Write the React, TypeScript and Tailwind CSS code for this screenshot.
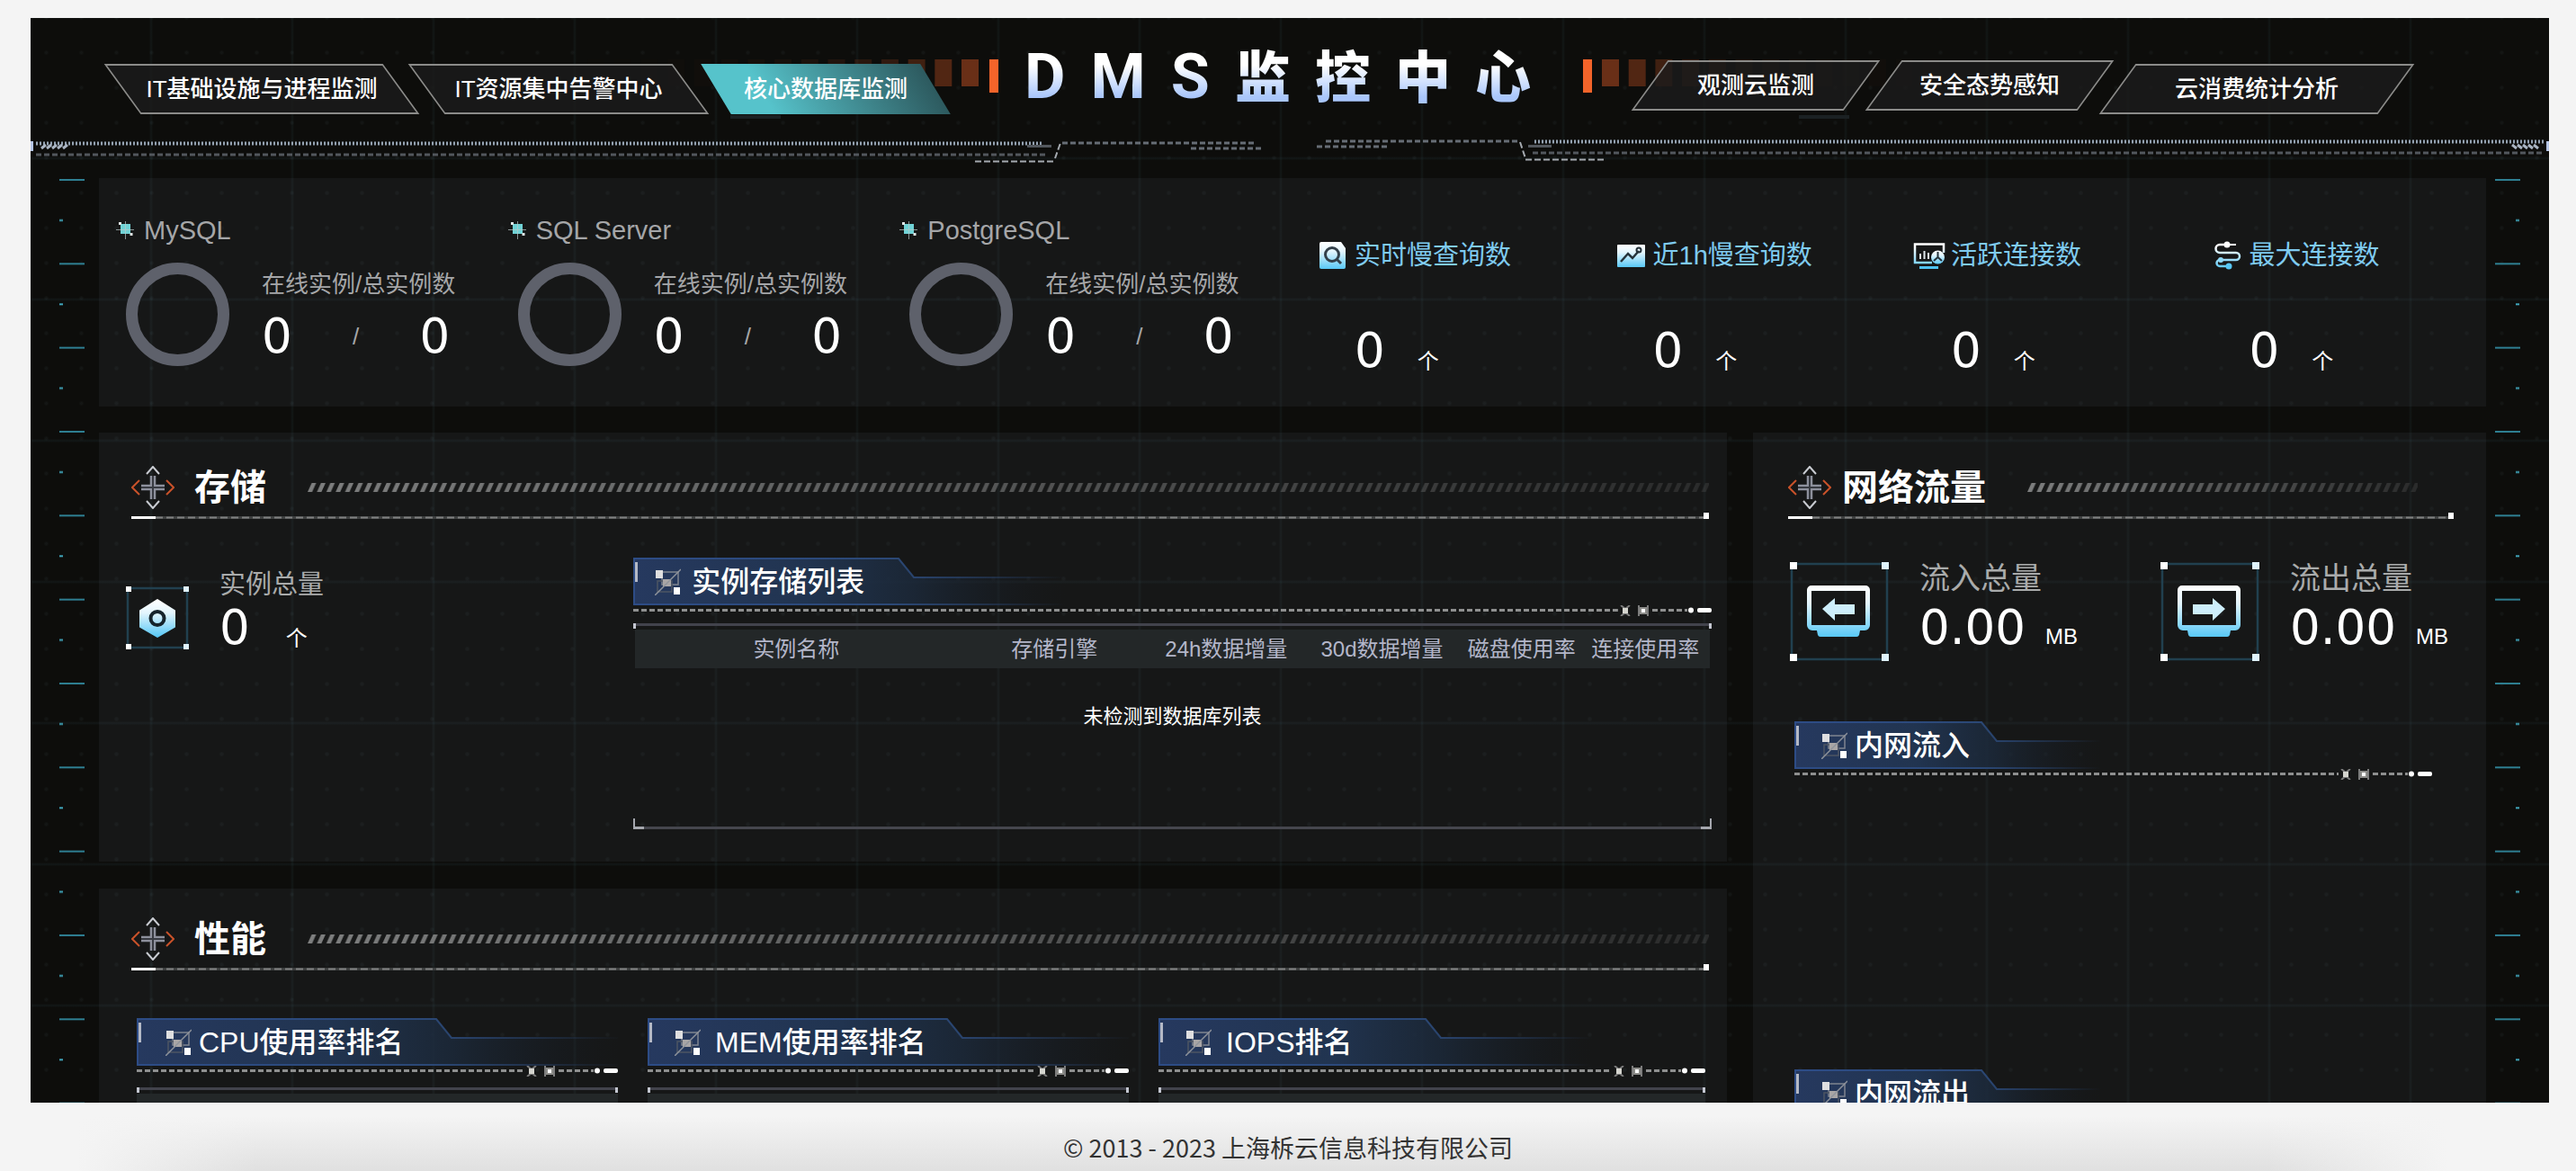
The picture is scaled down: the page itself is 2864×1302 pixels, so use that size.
import React from 'react';
import clsx from 'clsx';

const LEFT_TABS = [
  { label: 'IT基础设施与进程监测', width: 'w-[310px]', active: false },
  { label: 'IT资源集中告警中心', width: 'w-[294px]', active: false },
  { label: '核心数据库监测', width: 'w-[244px]', active: true },
];

const RIGHT_TABS = [
  { label: '观测云监测', width: 'w-[236px]', align: 'self-start' },
  { label: '安全态势感知', width: 'w-[236px]', align: 'self-start' },
  { label: '云消费统计分析', width: 'w-[310px]', align: 'self-end' },
];

const DATABASES = ['MySQL', 'SQL Server', 'PostgreSQL'];

const METRICS = [
  { label: '实时慢查询数', Icon: SearchDocIcon },
  { label: '近1h慢查询数', Icon: TrendIcon },
  { label: '活跃连接数', Icon: MonitorIcon },
  { label: '最大连接数', Icon: RouteIcon },
];

const COLUMNS = [
  { label: '实例名称', width: 'w-[30%]' },
  { label: '存储引擎', width: 'w-[18%]' },
  { label: '24h数据增量', width: 'w-[14%]' },
  { label: '30d数据增量', width: 'w-[15%]' },
  { label: '磁盘使用率', width: 'w-[11%]' },
  { label: '连接使用率', width: 'w-[12%]' },
];

const RANKINGS = [
  { title: 'CPU使用率排名', edge: 338, inset: 'gap-2 pl-8' },
  { title: 'MEM使用率排名', edge: 338, inset: 'gap-4 pl-[30px]' },
  { title: 'IOPS排名', edge: 302, inset: 'gap-4 pl-[30px]' },
];

/* Gradients and patterns shared by every drawing on the page */
function SharedDefs() {
  return (
    <svg className="h-0 w-0 shrink-0" aria-hidden="true">
      <defs>
        <linearGradient id="ice" x1="0" y1="0" x2="0" y2="1">
          <stop offset="0" stopColor="#ffffff" />
          <stop offset="0.35" stopColor="#e3f5fd" />
          <stop offset="1" stopColor="#58c8f6" />
        </linearGradient>
        <linearGradient id="iceAbs" gradientUnits="userSpaceOnUse" x1="0" y1="0" x2="0" y2="32">
          <stop offset="0.2" stopColor="#ffffff" />
          <stop offset="1" stopColor="#4fc3f5" />
        </linearGradient>
        <linearGradient id="tabFill" x1="0" y1="0" x2="1" y2="0">
          <stop offset="0" stopColor="#26395f" />
          <stop offset="0.4" stopColor="#213450" />
          <stop offset="0.65" stopColor="#1c2a3c" stopOpacity="0.8" />
          <stop offset="1" stopColor="#161b22" stopOpacity="0" />
        </linearGradient>
        <linearGradient id="tabEdge" x1="0" y1="0" x2="1" y2="0">
          <stop offset="0" stopColor="#2d4c86" />
          <stop offset="0.6" stopColor="#2b4876" />
          <stop offset="1" stopColor="#2b4876" stopOpacity="0" />
        </linearGradient>
        <pattern id="slashes" width="10.4" height="10" patternUnits="userSpaceOnUse">
          <path d="M0 10 L4.5 0 H9.5 L5 10 Z" fill="#7e7f7f" />
        </pattern>
        <pattern id="ticksLeft" y="1" width="76" height="93.33" patternUnits="userSpaceOnUse">
          <rect x="32" y="0" width="28" height="2" fill="#2e7f92" />
          <rect x="32" y="45" width="4" height="2" fill="#3fa5bb" />
        </pattern>
        <pattern id="ticksRight" y="1" width="70" height="93.33" patternUnits="userSpaceOnUse">
          <rect x="10" y="0" width="28" height="2" fill="#2e7f92" />
          <rect x="33" y="45" width="4" height="2" fill="#3fa5bb" />
        </pattern>
      </defs>
    </svg>
  );
}

/* Orange level bars and the dotted circuit line under the navigation */
function HeaderArt() {
  const bars = Array.from({ length: 15 }, (_, i) => i);
  return (
    <svg
      className="col-start-1 row-start-1 h-full w-full"
      viewBox="34 20 2800 178"
      preserveAspectRatio="none"
      aria-hidden="true"
    >
      <rect x="1100" y="66" width="10" height="37" fill="#f4642a" />
      <rect x="1760" y="66" width="10" height="37" fill="#f4642a" />
      {bars.map((i) => (
        <g key={i} fill="#f4642a" opacity={0.4 * Math.pow(0.74, i)}>
          <rect x={1069 - i * 29.7} y="66" width="19" height="30" />
          <rect x={1781 + i * 29.7} y="66" width="19" height="30" />
        </g>
      ))}
      <rect x="812" y="128" width="56" height="4" fill="#1b2123" />
      <rect x="2000" y="128" width="56" height="4" fill="#1b2123" />

      <g stroke="#93a1b0" strokeWidth="4">
        <path d="M40 159.5H1160" strokeDasharray="2 2" />
        <path d="M1706 157.5H2829" strokeDasharray="2 2" />
      </g>
      <g stroke="#52575d" strokeWidth="3">
        <path d="M40 172H1163" strokeDasharray="6 3" />
        <path d="M1704 170H2828" strokeDasharray="6 3" />
        <path d="M1142 162.5H1169M1699 162.5H1725" />
      </g>
      <g stroke="#666d75" strokeWidth="3" strokeDasharray="6 3">
        <path d="M1181 159H1394" />
        <path d="M1324 165H1403" />
        <path d="M1474 157H1688" />
        <path d="M1464 163H1543" />
      </g>
      <g stroke="#a5aab0" strokeWidth="2" strokeDasharray="7 3">
        <path d="M1084 179.5H1172" />
        <path d="M1696 177.5H1784" />
        <path d="M1173 176L1179 159" />
        <path d="M1690 158L1696 176" />
      </g>
      <rect x="34" y="157" width="3" height="11" fill="#b4c4e4" />
      <rect x="2831" y="157" width="3" height="11" fill="#b4c4e4" />
      <path
        d="M46 165l5-4M52 165l5-4M58 165l5-4M64 165l5-4M70 165l5-4M2798 165l-5-4M2804 165l-5-4M2810 165l-5-4M2816 165l-5-4M2822 165l-5-4"
        stroke="#a9b4c2"
        strokeWidth="3"
      />
    </svg>
  );
}

function NavTab({ label, className, active = false }: { label: string; className: string; active?: boolean }) {
  return (
    <button
      type="button"
      className={clsx(
        'relative isolate h-14 shrink-0 text-[26px] leading-none font-medium whitespace-nowrap text-white',
        'before:absolute before:inset-0 before:-z-10',
        active
          ? 'before:bg-linear-to-r before:from-[#56c3cb] before:from-20% before:to-[#2d5a5f]'
          : 'before:border-2 before:border-[#8b8b89] before:bg-[#1c1c1b]/80',
        className
      )}
    >
      {label}
    </button>
  );
}

function PageHeader() {
  return (
    <header className="grid h-[178px] shrink-0">
      <HeaderArt />
      <div className="col-start-1 row-start-1 grid grid-cols-[1fr_auto_1fr] items-start pt-[31px]">
        <nav className="mt-4 flex h-[60px] items-end gap-7 pl-[102px]">
          {LEFT_TABS.map((tab) => (
            <NavTab
              key={tab.label}
              label={tab.label}
              active={tab.active}
              className={clsx(tab.width, tab.active ? 'before:skew-x-[31deg]' : 'before:skew-x-[36deg]')}
            />
          ))}
        </nav>
        <h1 className="flex items-baseline bg-linear-to-b from-white from-30% to-[#a9c6fb] to-80% bg-clip-text leading-[68px] font-black text-transparent">
          <span className="font-[Roboto,sans-serif] text-[70px] font-bold tracking-[28px]">DMS</span>
          <span className="text-[62px] tracking-[27px]">监控中心</span>
        </h1>
        <nav className="mt-4 flex h-[60px] justify-end gap-6 pr-[170px]">
          {RIGHT_TABS.map((tab) => (
            <NavTab
              key={tab.label}
              label={tab.label}
              className={clsx(tab.width, tab.align, 'before:skew-x-[-36deg]')}
            />
          ))}
        </nav>
      </div>
    </header>
  );
}

function SparkIcon() {
  return (
    <svg width="20" height="20" viewBox="0 0 20 20" aria-hidden="true">
      <rect x="5" y="3" width="11" height="11" fill="#70d2d5" />
      <path d="M10.5 0V20M0 9.5H20" stroke="#b9c9c9" strokeWidth="1" opacity="0.7" />
      <rect x="3" y="1" width="3" height="3" fill="#dfe6e6" />
      <rect x="15.500" y="13" width="3" height="3" fill="#dfe6e6" />
    </svg>
  );
}

function SearchDocIcon() {
  return (
    <svg width="36" height="32" viewBox="0 0 36 32" aria-hidden="true">
      <path d="M5 1H27L32 8V29a2 2 0 0 1-2 2H5a2 2 0 0 1-2-2V3a2 2 0 0 1 2-2Z" fill="url(#ice)" />
      <circle cx="17" cy="15" r="7.500" fill="none" stroke="#33404a" strokeWidth="3" />
      <path d="M22.500 20.500L27 25" stroke="#33404a" strokeWidth="3" />
    </svg>
  );
}

function TrendIcon() {
  return (
    <svg width="36" height="32" viewBox="0 0 36 32" aria-hidden="true">
      <rect x="2" y="4" width="31" height="25" rx="1" fill="url(#ice)" />
      <path d="M6 23L14 14L19 19L26 11" fill="none" stroke="#26323a" strokeWidth="2.500" />
      <circle cx="26" cy="10" r="2.500" fill="none" stroke="#26323a" strokeWidth="2" />
    </svg>
  );
}

function MonitorIcon() {
  return (
    <svg width="36" height="32" viewBox="0 0 36 32" aria-hidden="true">
      <path d="M34 13V3.500H2V24H21" fill="none" stroke="url(#iceAbs)" strokeWidth="2.500" />
      <path d="M8 20V14M12.500 20V11M17 20V13" stroke="#dfe8ec" strokeWidth="2" />
      <circle cx="27.500" cy="18" r="7.500" fill="url(#ice)" />
      <path d="M27.500 18V12M27.500 18L32 22M27.500 18L23 22" stroke="#26323a" strokeWidth="2" />
      <path d="M7 29.500H28" stroke="#4fc3f5" strokeWidth="3" />
    </svg>
  );
}

function RouteIcon() {
  return (
    <svg width="36" height="32" viewBox="0 0 36 32" aria-hidden="true">
      <path
        d="M14 4H9a4.500 4.500 0 0 0 0 9H27a4 4 0 0 1 0 8H9a3.500 3.500 0 0 0 0 7h8"
        fill="none"
        stroke="url(#iceAbs)"
        strokeWidth="2.500"
      />
      <circle cx="17" cy="4" r="3.500" fill="#ffffff" />
      <path d="M20 4H27" stroke="#ffffff" strokeWidth="2" />
      <circle cx="10" cy="21" r="3" fill="#8fd9f8" />
      <circle cx="19" cy="28" r="3.500" fill="#58c8f6" />
    </svg>
  );
}

function CompassIcon() {
  return (
    <svg width="48" height="48" viewBox="0 0 48 48" fill="none" className="shrink-0" aria-hidden="true">
      <path d="M17 9L24 1L31 9M17 39L24 47L31 39" stroke="#c9ccd2" strokeWidth="2" />
      <path d="M9 16L1 24L9 32M39 16L47 24L39 32" stroke="#c9522a" strokeWidth="2" />
      <path
        d="M22 11V22H11M26 11V22H37M22 37V26H11M26 37V26H37"
        stroke="#8d909c"
        strokeWidth="2.500"
      />
      <path d="M24 11V37M11 24H37" stroke="#3b3e46" strokeWidth="1.500" />
    </svg>
  );
}

function NodesIcon() {
  return (
    <svg width="29" height="30" viewBox="0 0 29 30" fill="none" className="shrink-0" aria-hidden="true">
      <rect x="8" y="4" width="18" height="14" stroke="#7f8590" strokeWidth="1.500" />
      <rect x="3" y="14" width="16" height="12" stroke="#4d5563" strokeWidth="1.500" />
      <rect x="9" y="12" width="9" height="8" fill="#a9a6a6" />
      <path d="M0 30L29 1" stroke="#8f949c" strokeWidth="1.500" />
      <rect x="1" y="2" width="8" height="9" fill="#dfdfe0" />
      <rect x="21" y="21" width="7" height="8" fill="#ffffff" />
    </svg>
  );
}

/* Thin blue frame with four bright corners */
function IconFrame({ size, children }: { size: number; children: React.ReactNode }) {
  const c = size > 100 ? 8 : 6;
  const far = size - c;
  return (
    <svg width={size} height={size} viewBox={`0 0 ${size} ${size}`} className="shrink-0" aria-hidden="true">
      <rect x="2" y="2" width={size - 4} height={size - 4} fill="none" stroke="#21404f" strokeWidth="2.500" />
      {[[0, 0], [far, 0], [0, far], [far, far]].map(([x, y]) => (
        <rect key={`${x}-${y}`} x={x} y={y} width={c} height={c} fill={x ? '#dff3fd' : '#ffffff'} />
      ))}
      {children}
    </svg>
  );
}

function TrafficIcon({ arrow }: { arrow: string }) {
  return (
    <IconFrame size={110}>
      <g transform="translate(19 26)">
        <path
          fillRule="evenodd"
          fill="url(#ice)"
          d="M5 0H65a5 5 0 0 1 5 5V44a6 6 0 0 1-6 6H59l-1 5a3 3 0 0 1-3 2H15a3 3 0 0 1-3-2l-1-5H6a6 6 0 0 1-6-6V5a5 5 0 0 1 5-5ZM5 6V44H65V6Z"
        />
        <path d={arrow} fill="#cdeefb" />
      </g>
    </IconFrame>
  );
}

function DatabaseStatus({ name }: { name: string }) {
  return (
    <div>
      <h2 className="flex items-center gap-[11px] text-[29px] leading-10 text-[#a5a6a8]">
        <SparkIcon />
        {name}
      </h2>
      <div className="mt-4 flex pl-[11px]">
        <svg width="115" height="115" viewBox="0 0 115 115" className="shrink-0" aria-hidden="true">
          <circle cx="57.500" cy="57.500" r="51" fill="none" stroke="#5e616b" strokeWidth="13" />
        </svg>
        <div className="ml-9 text-[#a5a6a8]">
          <p className="mt-1.5 text-[26px] leading-9">在线实例/总实例数</p>
          <p className="mt-3 flex items-center justify-between pr-1.5 text-[26px] leading-[56px]">
            <Figure>0</Figure>
            <span>/</span>
            <Figure>0</Figure>
          </p>
        </div>
      </div>
    </div>
  );
}

function Figure({ children }: { children: React.ReactNode }) {
  return <span className="font-['DejaVu_Sans',sans-serif] text-[53px] leading-[56px] text-white">{children}</span>;
}

function SectionTitle({ title, className, slashClass }: { title: string; className?: string; slashClass?: string }) {
  return (
    <div className={className}>
      <div className="flex h-12 items-center">
        <CompassIcon />
        <h2 className={clsx('text-[40px] leading-none font-bold whitespace-nowrap text-white', slashClass ? 'ml-3' : 'ml-[22px]')}>
          {title}
        </h2>
        <svg
          className={clsx('ml-[46px] h-2.5 min-w-0 flex-1 [mask-image:linear-gradient(to_right,black,rgb(0_0_0/0.2))]', slashClass)}
          aria-hidden="true"
        >
          <rect width="100%" height="10" fill="url(#slashes)" />
        </svg>
      </div>
      <div className="mt-1 flex items-end">
        <span className="h-[3px] w-[27px] bg-white" />
        <svg className="h-[3px] min-w-0 flex-1" aria-hidden="true">
          <rect width="100%" height="3" fill="#3e4040" />
          <line x1="0" x2="100%" y1="1.500" y2="1.500" stroke="#7f8080" strokeWidth="2" strokeDasharray="8 4" />
        </svg>
        <span className="h-[7px] w-[6px] bg-white" />
      </div>
    </div>
  );
}

function SubTitle({ title, edge, inset }: { title: string; edge: number; inset: string }) {
  const span = Math.round(edge * 1.6);
  return (
    <div>
      <div className="grid h-[53px] overflow-hidden">
        <svg className="col-start-1 row-start-1" width={span} height="53" viewBox={`0 0 ${span} 53`} aria-hidden="true">
          <path d={`M0 1H${edge - 5}L${edge + 12} 22H${span}V53H0Z`} fill="url(#tabFill)" />
          <path d={`M0 1H${edge - 5}L${edge + 12} 22H${span}`} fill="none" stroke="url(#tabEdge)" strokeWidth="2" />
          <path d={`M1 1V52H${span}`} fill="none" stroke="url(#tabEdge)" strokeWidth="2" />
          <rect x="2" y="5" width="3" height="22" fill="#b4b9c6" />
        </svg>
        <h3
          className={clsx(
            'col-start-1 row-start-1 flex items-center text-[32px] leading-none font-medium whitespace-nowrap text-white',
            inset
          )}
        >
          <NodesIcon />
          {title}
        </h3>
      </div>
      <div className="flex">
        <svg className="h-3 min-w-0 flex-1" aria-hidden="true">
          <line x1="0" x2="100%" y1="5.500" y2="5.500" stroke="#8e8f8f" strokeWidth="3" strokeDasharray="6 3" />
        </svg>
        <svg width="104" height="12" viewBox="0 0 104 12" className="shrink-0" aria-hidden="true">
          <path d="M3 0L8 4L13 0M3 12L8 8L13 12M23 0V12M33 0V12" stroke="#7c7c7c" strokeWidth="2" fill="none" />
          <rect x="5" y="3" width="6" height="6" fill="#d5d5cf" />
          <rect x="24" y="2" width="8" height="8" fill="#8d8d8a" />
          <rect x="26" y="4" width="4" height="4" fill="#ffffff" />
          <path d="M38 5.500H77" stroke="#8e8f8f" strokeWidth="3" strokeDasharray="6 3" />
          <circle cx="81" cy="5.500" r="3" fill="#ffffff" />
          <rect x="88" y="3" width="16" height="5" rx="2" fill="#ffffff" />
        </svg>
      </div>
    </div>
  );
}

function FrameTop() {
  return (
    <div className="flex h-[3px] justify-between bg-[#42434c]">
      <span className="h-[6px] w-[3px] bg-[#c3c6d0]" />
      <span className="h-[6px] w-[3px] bg-[#c3c6d0]" />
    </div>
  );
}

function StoragePanel() {
  return (
    <section className="bg-[#bcdcff]/5 pt-[37px] pr-[17px] pb-9 pl-[30px]">
      <SectionTitle title="存储" className="mr-[3px] ml-1.5" />
      <div className="mt-[43px] grid grid-cols-[32%_1fr]">
        <div className="mt-2.5 flex items-start">
          <div className="mt-[22px]">
            <IconFrame size={70}>
              <path
                d="M35 15L54 27V45L35 56L16 45V27Z"
                fill="url(#ice)"
                stroke="url(#ice)"
                strokeWidth="2"
                strokeLinejoin="round"
              />
              <circle cx="35" cy="35.500" r="7.500" fill="none" stroke="#16242c" strokeWidth="4" />
            </IconFrame>
          </div>
          <div className="ml-[34px]">
            <p className="text-[29px] leading-10 text-[#a9abab]">实例总量</p>
            <p className="flex items-end gap-10">
              <Figure>0</Figure>
              <span className="text-2xl text-white">个</span>
            </p>
          </div>
        </div>
        <div>
          <SubTitle title="实例存储列表" edge={300} inset="gap-3 pl-6" />
          <div className="mt-2">
            <FrameTop />
            <div className="h-[214px] px-0.5 pt-1">
              <table className="w-full table-fixed text-center">
                <thead>
                  <tr className="h-[43px] bg-[#232728] text-2xl text-[#b3b6c9]">
                    {COLUMNS.map((col) => (
                      <th key={col.label} scope="col" className={clsx('font-normal whitespace-nowrap', col.width)}>
                        {col.label}
                      </th>
                    ))}
                  </tr>
                </thead>
                <tbody>
                  <tr>
                    <td colSpan={6} className="pt-9 text-[22px] leading-9 text-white">
                      未检测到数据库列表
                    </td>
                  </tr>
                </tbody>
              </table>
            </div>
            <div className="flex items-end">
              <span className="h-3 w-3 border-b-3 border-l-2 border-[#a5a7ae]" />
              <span className="h-[3px] flex-1 bg-[#45464e]" />
              <span className="h-3 w-3 border-r-2 border-b-3 border-[#a5a7ae]" />
            </div>
          </div>
        </div>
      </div>
    </section>
  );
}

function PerformancePanel() {
  return (
    <section className="min-h-0 flex-1 overflow-hidden bg-[#bcdcff]/5 pt-8 pr-6 pl-[42px]">
      <SectionTitle title="性能" className="-mr-1 -ml-1.5" />
      <div className="mt-[53px] grid grid-cols-[535fr_535fr_608fr] gap-[33px]">
        {RANKINGS.map((item) => (
          <div key={item.title} className="min-w-0">
            <SubTitle title={item.title} edge={item.edge} inset={item.inset} />
            <div className="mt-3">
              <FrameTop />
              <div className="mt-1 h-[300px] bg-[#232728]" />
            </div>
          </div>
        ))}
      </div>
    </section>
  );
}

function TrafficTotal({ label, arrow }: { label: string; arrow: string }) {
  return (
    <div className="flex">
      <TrafficIcon arrow={arrow} />
      <div className="ml-[34px]">
        <p className="text-[34px] leading-9 text-[#a9abab]">{label}</p>
        <p className="mt-[9px] flex items-baseline gap-[22px] text-2xl text-white">
          <Figure>0.00</Figure>
          MB
        </p>
      </div>
    </div>
  );
}

function NetworkPanel() {
  return (
    <section className="min-h-0 overflow-hidden bg-[#bcdcff]/5 pt-[37px] pl-[39px]">
      <SectionTitle title="网络流量" className="mr-9" slashClass="mr-10" />
      <div className="mt-12 mr-4 ml-0.5 grid grid-cols-[412fr_346fr]">
        <TrafficTotal label="流入总量" arrow="M17 26L31 14V21H53V32H31V39Z" />
        <TrafficTotal label="流出总量" arrow="M53 26L39 14V21H17V32H39V39Z" />
      </div>
      <div className="mt-[67px] mr-[60px] ml-[7px]">
        <SubTitle title="内网流入" edge={213} inset="gap-2 pl-[30px]" />
        <div className="h-[322px]" />
        <SubTitle title="内网流出" edge={213} inset="gap-2 pl-[30px]" />
      </div>
    </section>
  );
}

export default function App() {
  return (
    <div className="flex h-screen flex-col bg-[#f4f4f4] font-['Liberation_Sans','Noto_Sans_CJK_SC',sans-serif]">
      <SharedDefs />
      <main className="mt-5 mr-[30px] ml-[34px] flex min-h-0 flex-1 flex-col overflow-hidden bg-[#0d0d0b] bg-[radial-gradient(circle_at_center,rgb(110_140_150/0.07)_0_1px,transparent_3px),linear-gradient(to_right,transparent_153px,rgb(70_120_130/0.1)_155px,transparent_157px),linear-gradient(to_bottom,transparent_153px,rgb(70_120_140/0.1)_155px,transparent_157px)] bg-[size:39px_39px,157px_157px,157px_157px] bg-[position:37px_19px,136px_0px,0px_1px]">
        <PageHeader />
        <div className="flex min-h-0 flex-1">
          <svg className="h-full w-[76px] shrink-0" aria-hidden="true">
            <rect width="76" height="100%" fill="url(#ticksLeft)" />
          </svg>
          <div className="flex min-w-0 flex-1 flex-col gap-[29px]">
            <section className="grid h-[254px] shrink-0 grid-cols-[435fr_435fr_463fr_331fr_331fr_331fr_305fr] bg-[#bcdcff]/5 pt-[38px] pl-[19px]">
              {DATABASES.map((name) => (
                <DatabaseStatus key={name} name={name} />
              ))}
              {METRICS.map(({ label, Icon }) => (
                <div key={label} className="pt-7">
                  <h2 className="flex items-center gap-1.5 text-[29px] leading-10 whitespace-nowrap text-[#7fcbf0]">
                    <Icon />
                    {label}
                  </h2>
                  <p className="mt-[58px] flex items-end gap-9 pl-[42px]">
                    <Figure>0</Figure>
                    <span className="text-2xl text-white">个</span>
                  </p>
                </div>
              ))}
            </section>
            <div className="grid min-h-0 flex-1 grid-cols-[1810fr_815fr] gap-[29px]">
              <div className="flex min-h-0 min-w-0 flex-col gap-[30px]">
                <StoragePanel />
                <PerformancePanel />
              </div>
              <NetworkPanel />
            </div>
          </div>
          <svg className="h-full w-[70px] shrink-0" aria-hidden="true">
            <rect width="70" height="100%" fill="url(#ticksRight)" />
          </svg>
        </div>
      </main>
      <footer className="flex h-[76px] shrink-0 items-center justify-center bg-[linear-gradient(to_right,#f4f4f4_3%,transparent_10%,transparent_88%,#f4f4f4_95%),linear-gradient(to_top,#e0e0e0,#f4f4f4_80%)] pt-6 font-['Noto_Sans_CJK_SC',sans-serif] text-[27px] leading-10 text-[#333]">
        © 2013 - 2023 上海柝云信息科技有限公司
      </footer>
    </div>
  );
}
